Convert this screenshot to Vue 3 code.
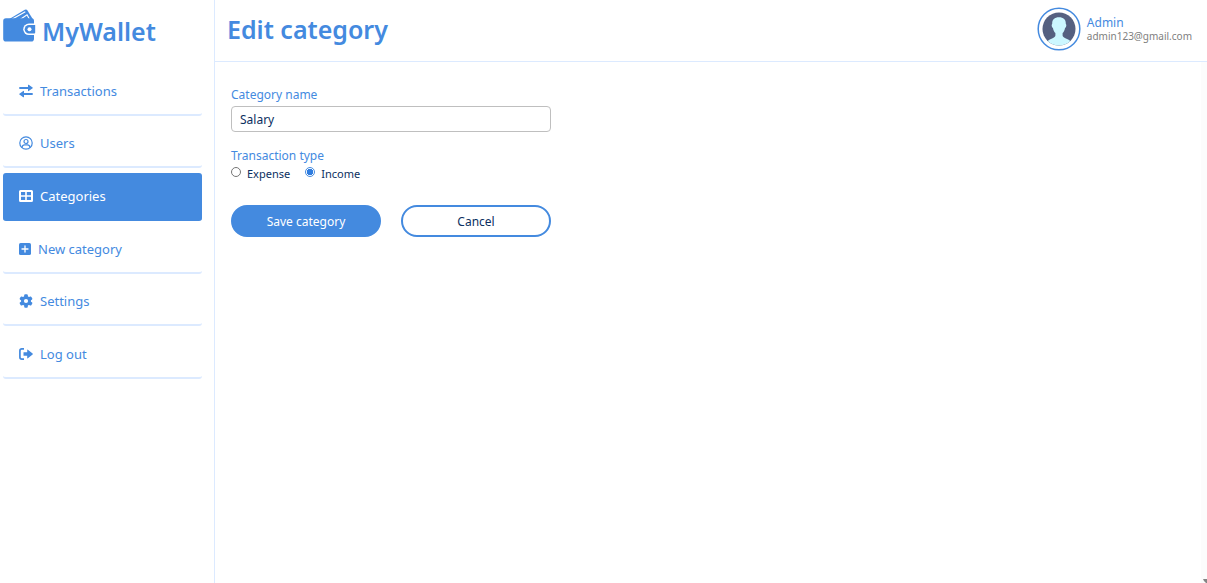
<script setup>
import { ref } from 'vue'

const items = ['Transactions', 'Users', 'Categories', 'New category', 'Settings', 'Log out']
const active = ref('Categories')
const name = ref('Salary')
const type = ref('Income')
</script>

<template>
  <div class="app">
    <aside class="sidebar">
      <a class="brand" href="#">
        <svg class="brand-icon" viewBox="0 0 34 34" aria-hidden="true">
          <path d="M5.500 10.500 21.800.8q1.700-.9 2.700.7L30 10.500Z" fill="#448adf" />
          <path d="M9 10.200 22.300 2.800M17.500 10.200l6.500-4.400 2.500 4.400" fill="none" stroke="#fff" stroke-width="1.200" />
          <path d="M3 9.300h25.500a2.500 2.500 0 0 1 2.500 2.500v17.900a2.800 2.800 0 0 1-2.800 2.800H3A2.800 2.800 0 0 1 .2 29.700V12.100A2.800 2.800 0 0 1 3 9.300Z" fill="#448adf" />
          <path d="M33 14.500h-7a5.800 5.800 0 0 0 0 11.600h7Z" fill="#fff" />
          <path d="M32.200 16h-6.200a4.300 4.300 0 0 0 0 8.600h5.200a1 1 0 0 0 1-1Z" fill="#448adf" />
          <circle cx="26.500" cy="20.300" r="2" fill="#fff" />
        </svg>
        <span>MyWallet</span>
      </a>
      <nav>
        <ul>
          <li v-for="item in items" :key="item">
            <a href="#" :class="{ active: item === active }" @click.prevent="active = item">
              <svg v-if="item === 'Transactions'" class="icon" viewBox="0 0 14 14" aria-hidden="true">
                <path d="M.3 2.900h8.700V1.100q0-.7.700-.3l3.900 2.700q.5.400 0 .8L9.700 7q-.7.400-.7-.3V4.900H.3ZM13.700 9.100H5V7.300q0-.7-.7-.3L.4 9.700q-.5.400 0 .8l3.900 2.700q.7.400.7-.3v-1.800h8.700Z" fill="currentColor" />
              </svg>
              <svg v-else-if="item === 'Users'" class="icon" viewBox="0 0 14 14" fill="none" stroke="currentColor" stroke-width="1.200" aria-hidden="true">
                <circle cx="7" cy="7" r="6.200" />
                <circle cx="7" cy="5.500" r="2" />
                <path d="M3.200 11.700V11a2.300 2.300 0 0 1 2.300-2.100h3a2.300 2.300 0 0 1 2.300 2.100v.7" />
              </svg>
              <svg v-else-if="item === 'Categories'" class="icon" viewBox="0 0 14 14" aria-hidden="true">
                <path fill-rule="evenodd" d="M1.500 1h11A1.500 1.500 0 0 1 14 2.500v9a1.500 1.500 0 0 1-1.500 1.500h-11A1.500 1.500 0 0 1 0 11.500v-9A1.500 1.500 0 0 1 1.500 1ZM2 3v3.200h4.200V3Zm5.800 0v3.200H12V3ZM2 7.800V11h4.200V7.800Zm5.800 0V11H12V7.800Z" fill="currentColor" />
              </svg>
              <svg v-else-if="item === 'New category'" class="icon icon-narrow" viewBox="0 0 12 14" aria-hidden="true">
                <rect y="1" width="12" height="12" rx="1.600" fill="currentColor" />
                <path d="M6 4v6M3 7h6" stroke="#fff" stroke-width="1.300" stroke-linecap="round" />
              </svg>
              <svg v-else-if="item === 'Settings'" class="icon" viewBox="0 0 14 14" aria-hidden="true">
                <g fill="currentColor">
                  <rect v-for="angle in [0, 60, 120]" :key="angle" x="5.200" y=".3" width="3.600" height="13.400" rx="1" :transform="`rotate(${angle} 7 7)`" />
                  <circle cx="7" cy="7" r="5" />
                </g>
                <circle cx="7" cy="7" r="2.100" fill="#fff" />
              </svg>
              <svg v-else class="icon" viewBox="0 0 14 14" aria-hidden="true">
                <path d="M5 1.900H2.800A1.900 1.900 0 0 0 .9 3.800v6.400a1.900 1.900 0 0 0 1.900 1.900H5" fill="none" stroke="currentColor" stroke-width="1.700" />
                <path d="M4.500 5.300h3.700V3.200q0-.9.700-.4l4.700 3.700q.6.500 0 1L8.900 11.200q-.7.500-.7-.4V8.700H4.500Z" fill="currentColor" />
              </svg>
              <span>{{ item }}</span>
            </a>
          </li>
        </ul>
      </nav>
    </aside>

    <div class="page">
      <header>
        <h1>Edit category</h1>
        <div class="account">
          <svg class="avatar" viewBox="0 0 44 44" aria-hidden="true">
            <defs><clipPath id="avatar-disc"><circle cx="22" cy="22" r="16.500" /></clipPath></defs>
            <circle cx="22" cy="22" r="20.800" fill="#fff" stroke="#448adf" stroke-width="1.500" />
            <g clip-path="url(#avatar-disc)">
              <path d="M5 5h34v34H5Z" fill="#556080" />
              <path d="M22 10.300c4.700 0 7 2.500 6.800 6.700.8.400.8 3-.8 4.200-.4 2.200-1.200 3.700-2.400 4.800v2.600c0 1.200 1.200 2 3.300 2.900 2.500 1 4.200 2 5.100 3.500V41H10v-6c.9-1.500 2.600-2.500 5.100-3.500 2.100-.9 3.300-1.700 3.300-2.900V26c-1.200-1.100-2-2.600-2.400-4.800-1.600-1.200-1.600-3.800-.8-4.200-.2-4.200 2.100-6.700 6.800-6.700Z" fill="#ccf7ff" />
            </g>
          </svg>
          <div>
            <div class="account-name">Admin</div>
            <div class="account-mail">admin123@gmail.com</div>
          </div>
        </div>
      </header>
      <main>
        <form @submit.prevent>
          <label class="caption" for="category-name">Category name</label>
          <input id="category-name" v-model="name" class="text-field" type="text" />
          <fieldset>
            <legend class="caption">Transaction type</legend>
            <div class="choices">
              <label v-for="option in ['Expense', 'Income']" :key="option">
                <input v-model="type" type="radio" name="type" :value="option" />
                <span>{{ option }}</span>
              </label>
            </div>
          </fieldset>
          <div class="actions">
            <button class="save" type="submit">Save category</button>
            <button class="cancel" type="button">Cancel</button>
          </div>
        </form>
        <div class="track" aria-hidden="true">
          <svg viewBox="0 0 4 5"><path d="M0 1h4v4H3L1 3Z" fill="#858585" /></svg>
        </div>
      </main>
    </div>
  </div>
</template>

<style>
body {
  margin: 0;
  background: #fff;
}
</style>

<style scoped>
.app {
  display: flex;
  min-height: 100vh;
  font-family: "Noto Sans", sans-serif;
  color: #448adf;
}
* {
  box-sizing: border-box;
}
a {
  color: inherit;
  text-decoration: none;
}
.sidebar {
  flex: none;
  width: 215px;
  padding: 0 12px 0 3px;
  border-right: 1px solid #dceaff;
}
.brand {
  display: flex;
  gap: 5px;
  height: 63px;
  padding-top: 9px;
  font-size: 25px;
  font-weight: 600;
  line-height: 45px;
}
.brand-icon {
  flex: none;
  width: 34px;
  height: 34px;
}
ul {
  display: grid;
  grid-auto-rows: 1fr;
  height: 316px;
  margin: 0;
  padding: 0;
  list-style: none;
}
li {
  display: flex;
  padding-top: 5px;
}
li a {
  display: flex;
  flex: 1;
  align-items: center;
  gap: 7px;
  padding-left: 16px;
  border-bottom: 2px solid #dceaff;
  border-radius: 3px;
  font-size: 13px;
}
li a.active {
  background: #448adf;
  border-color: #448adf;
  color: #fff;
}
.icon {
  flex: none;
  width: 14px;
  height: 14px;
}
.icon-narrow {
  width: 12px;
}
.page {
  display: flex;
  flex: 1;
  flex-direction: column;
  min-width: 0;
}
header {
  display: flex;
  align-items: center;
  justify-content: space-between;
  height: 62px;
  padding: 0 15px 4px 12px;
  border-bottom: 1px solid #dceaff;
}
h1 {
  margin: 0;
  font-size: 25px;
  font-weight: 600;
  line-height: 32px;
}
.account {
  display: flex;
  align-items: center;
  gap: 6px;
}
.avatar {
  width: 44px;
  height: 44px;
}
.account-name {
  font-size: 12px;
  line-height: 14px;
}
.account-mail {
  font-size: 10px;
  line-height: 12px;
  color: #808080;
}
main {
  display: flex;
  flex: 1;
  justify-content: space-between;
  padding-left: 16px;
}
form {
  flex: 0 1 320px;
  padding-top: 24px;
}
.caption {
  display: block;
  padding: 0;
  font-size: 12px;
  line-height: 18px;
}
.text-field {
  display: block;
  width: 100%;
  height: 26px;
  margin-top: 2px;
  padding: 0 8px;
  border: 1px solid #bfbfbf;
  border-radius: 4px;
  font: 12px "Noto Sans", sans-serif;
  color: #0b2f61;
}
fieldset {
  min-width: 0;
  margin: 15px 0 0;
  padding: 0;
  border: 0;
}
.choices {
  display: flex;
  gap: 15px;
  padding-top: 1px;
  color: #0b2f61;
  font-size: 11px;
  line-height: 16px;
}
.choices label {
  display: flex;
  gap: 6px;
}
.choices input {
  appearance: none;
  width: 10px;
  height: 10px;
  margin: 1px 0 0;
  border: 1px solid #767676;
  border-radius: 50%;
  background: #fff;
}
.choices input:checked {
  border-color: #448adf;
  background: radial-gradient(circle, #2f7de0 0 3px, #fff 3px);
}
.actions {
  display: grid;
  grid-template-columns: 1fr 1fr;
  gap: 20px;
  margin-top: 23px;
}
button {
  height: 32px;
  padding: 0;
  border: 2px solid #448adf;
  border-radius: 16px;
  background: #fff;
  color: #0b2f61;
  font: 12px "Noto Sans", sans-serif;
}
.save {
  background: #448adf;
  color: #fff;
}
.track {
  display: flex;
  align-items: flex-end;
  justify-content: flex-end;
  width: 6px;
  background: #fcfcfc;
}
.track svg {
  width: 4px;
  height: 5px;
}
</style>
